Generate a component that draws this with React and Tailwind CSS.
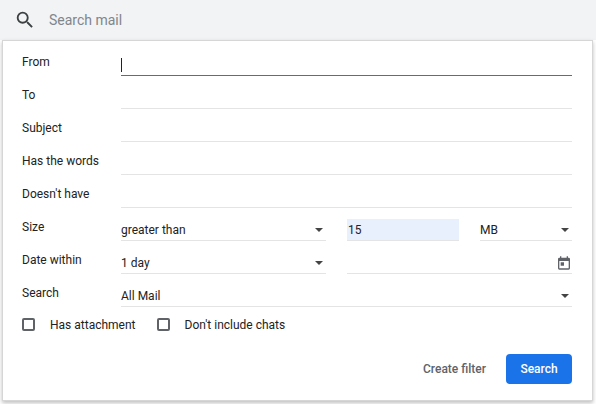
const Caret = () => (
  <svg width="8" height="4" viewBox="0 0 10 5" className="fill-[#444]">
    <path d="M0 0l5 5 5-5z" />
  </svg>
);

const Row = ({ label, children }) => (
  <div className="flex items-end h-[33px]">
    <div className="w-[99px] pb-[5px] text-[#222]">{label}</div>
    <div className="flex-1 flex items-end gap-[21px]">{children}</div>
  </div>
);

const Line = ({ className = "", children, active }) => (
  <div
    className={`h-[22px] flex items-center justify-between border-b ${
      active ? "border-[#4d6fa8]" : "border-[#e4e4e4]"
    } ${className}`}
  >
    {children}
  </div>
);

const Select = ({ value, className }) => (
  <Line className={className}>
    <span className="text-[#222]">{value}</span>
    <span className="pr-[3px]">
      <Caret />
    </span>
  </Line>
);

export default function App() {
  return (
    <div
      className="w-[596px] h-[404px] bg-white text-[12px] relative overflow-hidden"
      style={{ fontFamily: "Roboto, 'Liberation Sans', sans-serif" }}
    >
      <div className="h-[40px] bg-[#f1f3f4] flex items-center pl-[14px] gap-[13px]">
        <svg width="22" height="22" viewBox="0 0 24 24" className="fill-[#3c4043]">
          <path d="M15.5 14h-.79l-.28-.27A6.47 6.47 0 0 0 16 9.5 6.5 6.5 0 1 0 9.5 16c1.61 0 3.09-.59 4.23-1.57l.27.28v.79l5 4.99L20.49 19l-4.99-5zm-6 0C7.01 14 5 11.99 5 9.5S7.01 5 9.5 5 14 7.01 14 9.5 11.99 14 9.5 14z" />
        </svg>
        <span className="text-[14px] text-[#80868b]">Search mail</span>
      </div>
      <div className="absolute left-[2px] top-[40px] w-[591px] h-[361px] bg-white border border-[#d6d6d6] shadow-[0_2px_4px_rgba(0,0,0,0.25)] pl-[19px] pr-[20px] pt-[2px]">
        <Row label="From">
          <Line active className="flex-1">
            <span className="w-px h-[14px] bg-[#222]" />
          </Line>
        </Row>
        <Row label="To"><Line className="flex-1" /></Row>
        <Row label="Subject"><Line className="flex-1" /></Row>
        <Row label="Has the words"><Line className="flex-1" /></Row>
        <Row label="Doesn't have"><Line className="flex-1" /></Row>
        <Row label="Size">
          <Select value="greater than" className="w-[205px]" />
          <Line className="w-[112px] bg-[#e8f0fe] px-[1px]">
            <span className="text-[#222]">15</span>
          </Line>
          <Select value="MB" className="flex-1" />
        </Row>
        <Row label="Date within">
          <Select value="1 day" className="w-[205px]" />
          <Line className="flex-1">
            <span />
            <svg width="16" height="16" viewBox="0 0 24 24" className="fill-[#5f6368]">
              <path d="M19 4h-1V2h-2v2H8V2H6v2H5a2 2 0 0 0-2 2v14a2 2 0 0 0 2 2h14a2 2 0 0 0 2-2V6a2 2 0 0 0-2-2zm0 16H5V9h14v11zM7 11h5v5H7z" />
            </svg>
          </Line>
        </Row>
        <Row label="Search">
          <Select value="All Mail" className="flex-1" />
        </Row>
        <div className="flex items-center h-[33px] pt-[2px]">
          <span className="w-[13px] h-[13px] border-2 border-[#5f6368] rounded-[2px] mr-[15px]" />
          <span className="text-[#222] mr-[21px]">Has attachment</span>
          <span className="w-[13px] h-[13px] border-2 border-[#5f6368] rounded-[2px] mr-[15px]" />
          <span className="text-[#222]">Don't include chats</span>
        </div>
        <div className="flex justify-end items-center mt-[14px] gap-[20px]">
          <span className="text-[#5f6368] font-medium">Create filter</span>
          <span className="w-[66px] h-[30px] rounded-[4px] bg-[#1a73e8] text-white font-medium flex items-center justify-center">
            Search
          </span>
        </div>
      </div>
    </div>
  );
}
